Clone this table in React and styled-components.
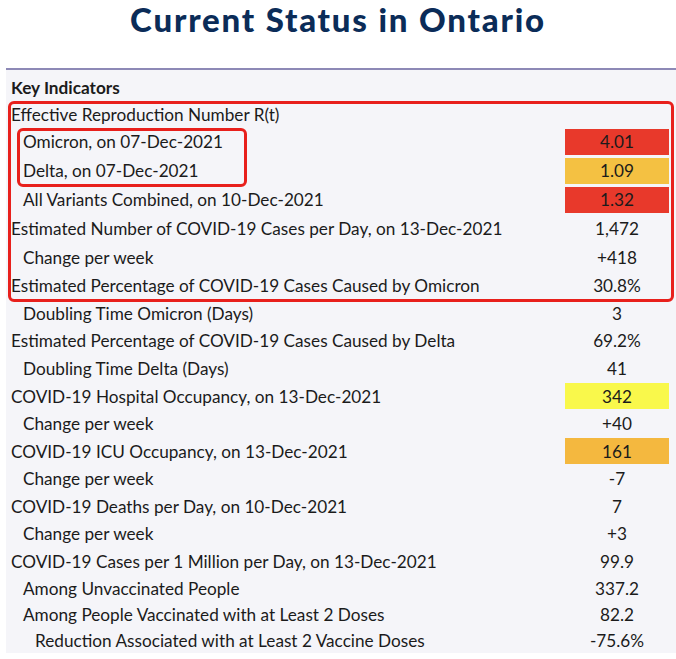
import React from "react";
import styled, { createGlobalStyle } from "styled-components";

const GlobalStyle = createGlobalStyle`
  html, body {
    margin: 0;
    padding: 0;
    background: #ffffff;
  }
`;

const Page = styled.div`
  width: 676px;
  height: 659px;
  overflow: hidden;
  background: #ffffff;
`;

const Title = styled.h1`
  margin: 0;
  height: 68px;
  padding-top: 0;
  box-sizing: border-box;
  text-align: center;
  font-family: Lato, "Noto Sans", sans-serif;
  font-weight: 900;
  font-size: 33px;
  line-height: 38px;
  color: #0b2c58;
  letter-spacing: 1.8px;
`;

const Table = styled.div`
  margin-left: 6px;
  border-top: 2px solid #8d89b6;
  background: #f5f5f9;
  padding-top: 4px;
  font-family: Lato, "Noto Sans", sans-serif;
  font-size: 17.2px;
  color: #1b1b1b;
`;

const Group = styled.div`
  position: relative;

  &::after {
    content: "";
    position: absolute;
    top: ${(p) => p.$top}px;
    bottom: ${(p) => p.$bottom}px;
    left: ${(p) => p.$left}px;
    ${(p) => (p.$width ? `width: ${p.$width}px;` : `right: ${p.$right}px;`)}
    border: 3px solid #e8201c;
    border-radius: 6px;
    box-sizing: border-box;
    pointer-events: none;
  }
`;

const Row = styled.div`
  display: flex;
  align-items: center;
  height: ${(p) => p.$h}px;
`;

const Label = styled.div`
  flex: 1;
  padding-left: ${(p) => 5 + p.$indent * 12}px;
  font-weight: ${(p) => (p.$bold ? 700 : 400)};
  white-space: nowrap;
`;

const Value = styled.div`
  width: 104px;
  height: 26px;
  margin-right: 7px;
  display: flex;
  align-items: center;
  justify-content: center;
  background: ${(p) => p.$fill || "transparent"};
`;

const RED = "#e8392b";
const AMBER = "#f4c142";
const YELLOW = "#f9f84b";
const ORANGE = "#f4b83f";

const Item = ({ label, value, indent = 0, h = 27.6, fill, bold }) => (
  <Row $h={h}>
    <Label $indent={indent} $bold={bold}>
      {label}
    </Label>
    <Value $fill={fill}>{value}</Value>
  </Row>
);

const rest = [
  { label: "Doubling Time Omicron (Days)", value: "3", indent: 1, h: 28 },
  { label: "Estimated Percentage of COVID-19 Cases Caused by Delta", value: "69.2%", h: 27 },
  { label: "Doubling Time Delta (Days)", value: "41", indent: 1, h: 28 },
  { label: "COVID-19 Hospital Occupancy, on 13-Dec-2021", value: "342", fill: YELLOW, h: 28 },
  { label: "Change per week", value: "+40", indent: 1, h: 27 },
  { label: "COVID-19 ICU Occupancy, on 13-Dec-2021", value: "161", fill: ORANGE, h: 28 },
  { label: "Change per week", value: "-7", indent: 1, h: 27 },
  { label: "COVID-19 Deaths per Day, on 10-Dec-2021", value: "7", h: 28 },
  { label: "Change per week", value: "+3", indent: 1, h: 27 },
  { label: "COVID-19 Cases per 1 Million per Day, on 13-Dec-2021", value: "99.9", h: 28 },
  { label: "Among Unvaccinated People", value: "337.2", indent: 1, h: 26 },
  { label: "Among People Vaccinated with at Least 2 Doses", value: "82.2", indent: 1, h: 26 },
  { label: "Reduction Associated with at Least 2 Vaccine Doses", value: "-75.6%", indent: 2, h: 26 },
];

export default function App() {
  return (
    <Page>
      <GlobalStyle />
      <Title>Current Status in Ontario</Title>
      <Table>
        <Item label="Key Indicators" bold h={27} />
        <Group $top={0} $bottom={-3} $left={2} $right={2}>
          <Item label="Effective Reproduction Number R(t)" h={26} />
          <Group $top={1} $bottom={-2} $left={11} $width={230}>
            <Item label="Omicron, on 07-Dec-2021" value="4.01" indent={1} fill={RED} h={29} />
            <Item label="Delta, on 07-Dec-2021" value="1.09" indent={1} fill={AMBER} h={29} />
          </Group>
          <Item label="All Variants Combined, on 10-Dec-2021" value="1.32" indent={1} fill={RED} h={29} />
          <Item label="Estimated Number of COVID-19 Cases per Day, on 13-Dec-2021" value="1,472" h={29} />
          <Item label="Change per week" value="+418" indent={1} h={28} />
          <Item label="Estimated Percentage of COVID-19 Cases Caused by Omicron" value="30.8%" h={28} />
        </Group>
        {rest.map((r, i) => (
          <Item key={i} {...r} />
        ))}
      </Table>
    </Page>
  );
}
